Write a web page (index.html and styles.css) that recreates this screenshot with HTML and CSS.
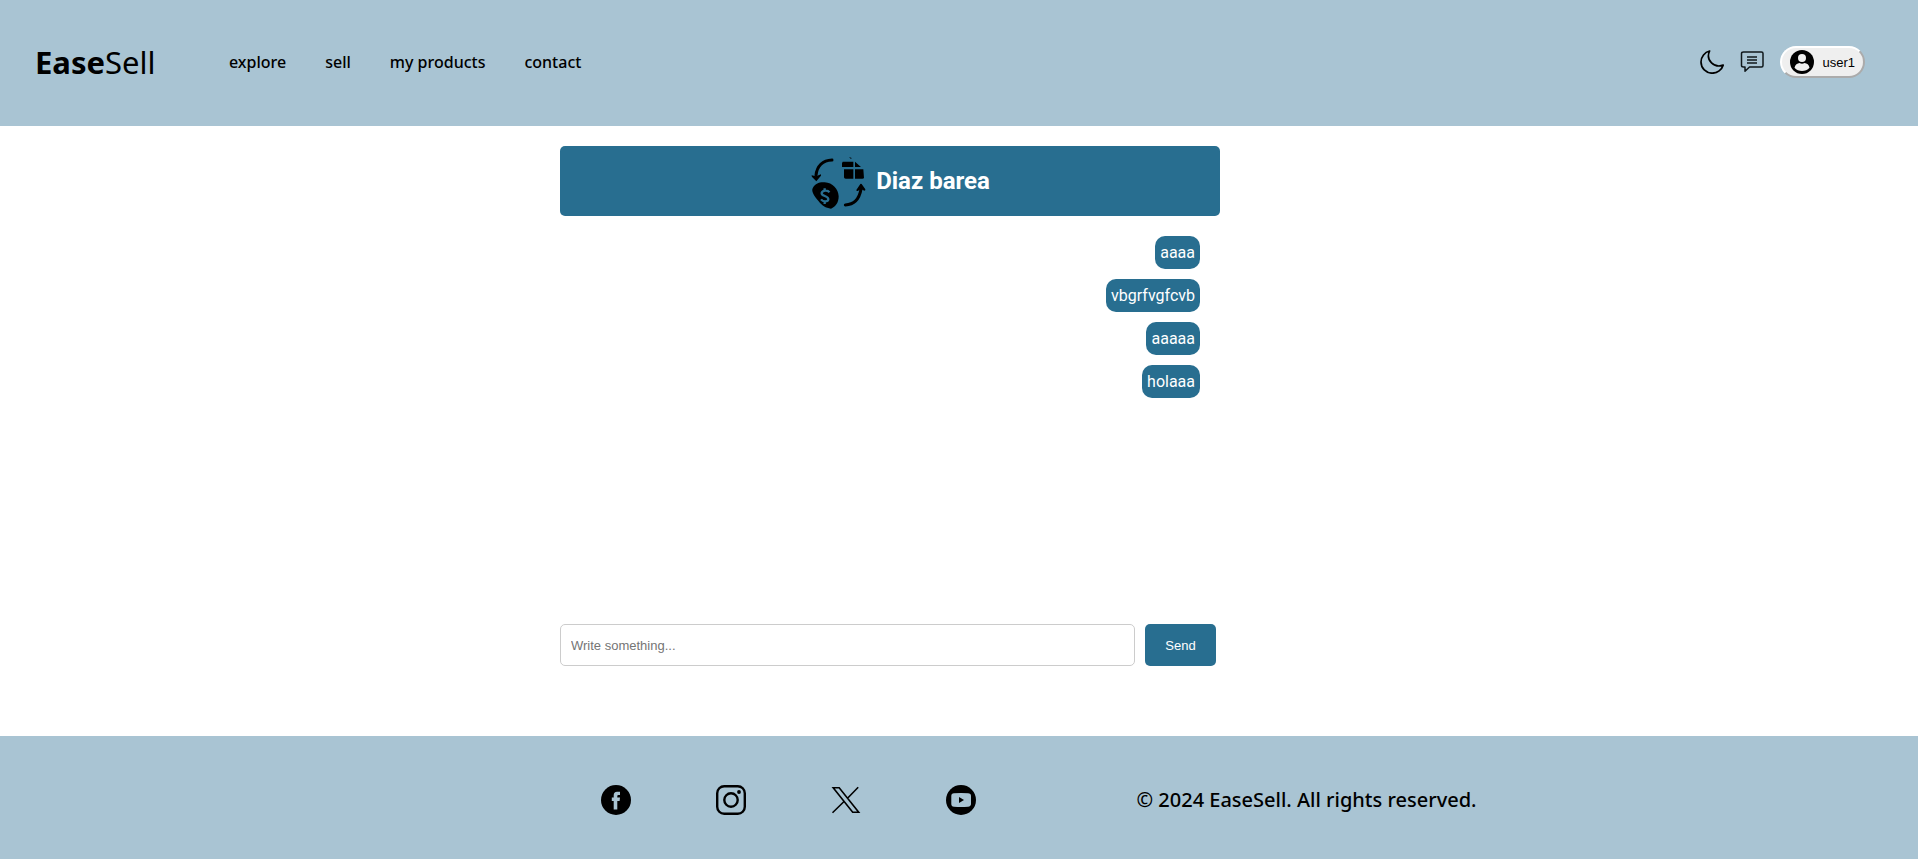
FILE: index.html
```html
<!DOCTYPE html>
<html lang="en">
<head>
<meta charset="utf-8">
<meta name="viewport" content="width=device-width, initial-scale=1">
<title>EaseSell</title>
<link rel="stylesheet" href="styles.css">
</head>
<body>
<header class="site-header">
  <a class="logo" href="#"><strong>Ease</strong>Sell</a>
  <nav class="nav">
    <a href="#">explore</a>
    <a href="#">sell</a>
    <a href="#">my products</a>
    <a href="#">contact</a>
  </nav>
  <div class="tools">
    <button class="icon-button" type="button" aria-label="Dark mode">
      <svg width="24" height="24" viewBox="0 0 24 24" fill="none" stroke="#000" stroke-width="1.7" stroke-linejoin="round"><path d="M9.6 1C4.8 2.2 1 6.600 1 12A11.200 11.200 0 0 0 12.200 23.200C17.400 23.200 21.800 19.800 23.200 15.100C14.600 18.500 5.200 10.200 9.600 1Z"/></svg>
    </button>
    <a class="icon-button" href="#" aria-label="Messages">
      <svg width="24" height="24" viewBox="0 0 24 24" fill="none" stroke="#10181c" stroke-width="1.5" stroke-linejoin="round"><path d="M3.500 2H21.500Q23 2 23 3.500V15.500Q23 17 21.500 17H9.500L5 21.300V17H3.500Q1.500 17 1.500 15.500V3.500Q1.500 2 3.500 2Z"/><path d="M7 7H17M7 10H17M7 13H17"/></svg>
    </a>
    <button class="user" type="button">
      <svg width="24" height="24" viewBox="0 0 24 24"><circle cx="12" cy="12" r="12"/><circle cx="12" cy="8" r="4" fill="#efefef"/><path d="M4.500 17.800C5 14.800 7.500 13.200 9.500 13Q12 14.500 14.500 13C17 13.200 19 14.800 19.500 17.800Q16.500 21 12 21T4.500 17.800Z" fill="#efefef"/></svg>
      user1
    </button>
  </div>
</header>
<main class="chat">
  <div class="chat-title">
    <svg width="60" height="60" viewBox="30 15 180 180">
      <g fill="none" stroke="#000" stroke-width="9" stroke-linecap="round"><path d="M96 42C68 43 51 61 48 88"/><path d="M136 177C162 176 178 158 183 130"/></g>
      <path d="M35 88L48 91 63 85Q65 90 59 94L49 106 37 94Q34 91 35 88ZM169 132L181 114Q184 112 187 117L196 130Q197 134 193 134L183 129 173 135Q169 136 169 132Z"/>
      <path d="M38 127C45 113 57 108 74 109C98 110 115 129 116 151C116 170 107 182 93 188C77 187 65 178 56 166C44 152 33 137 38 127Z"/>
      <path d="M88 139C84 132 67 132 65 141C63 151 86 149 85 160C84 168 69 168 63 160M74 127V135M74 165V174" fill="none" stroke="#286e90" stroke-width="7"/>
      <path d="M128 47H160V63H126V52ZM165 47L183 63H165ZM132 70H160V98H137Q132 98 132 94ZM165 70H190L192 96Q191 98 187 98H165ZM147 33L155 36 153 39Z"/>
    </svg>
    <h1>Diaz barea</h1>
  </div>
  <div class="messages">
    <p>aaaa</p>
    <p>vbgrfvgfcvb</p>
    <p>aaaaa</p>
    <p>holaaa</p>
  </div>
  <form class="composer">
    <input type="text" placeholder="Write something..." aria-label="Message">
    <button type="button">Send</button>
  </form>
</main>
<footer class="site-footer">
  <div class="social">
    <a href="#" aria-label="Facebook"><svg width="30" height="30" viewBox="0 0 30 30"><circle cx="15" cy="15" r="15"/><path d="M12.700 24.500V16H10.800V12.500H12.700V10.500Q12.700 6.800 16 6.800H19V10H17.300Q16.300 10 16.300 11V12.500H19L18.600 16H16.300V24.500Z" fill="#a9c4d3"/></svg></a>
    <a href="#" aria-label="Instagram"><svg width="30" height="30" viewBox="0 0 30 30" fill="none" stroke="#000" stroke-width="2.400"><rect x="1.200" y="1.200" width="27.600" height="27.600" rx="7"/><circle cx="15" cy="15" r="6.700"/><circle cx="23" cy="7" r="1.900" fill="#000" stroke="none"/></svg></a>
    <a href="#" aria-label="X"><svg width="30" height="30" viewBox="0 0 30 30" fill="none" stroke="#000" stroke-width="1.600"><path d="M2.200 2.800H8.200L27.700 27.200H21.700ZM27.200 2.200L16.300 13.500M1.500 27.800L13.300 16.300"/></svg></a>
    <a href="#" aria-label="YouTube"><svg width="30" height="30" viewBox="0 0 30 30"><circle cx="15" cy="15" r="15"/><path d="M8 8.300Q15 7.700 22 8.300Q25 8.500 25 11V19Q25 21.300 22 21.700Q15 22.300 8 21.700Q5.300 21.500 5.300 19V11Q5.300 8.500 8 8.300Z" fill="#a9c4d3"/><path d="M13 12V18L18 15Z"/></svg></a>
  </div>
  <p class="copyright">© 2024 EaseSell. All rights reserved.</p>
</footer>
</body>
</html>
```
FILE: styles.css
```css
* { box-sizing: border-box; }

body {
  margin: 0;
  min-height: 100vh;
  display: flex;
  flex-direction: column;
  font-family: Roboto, sans-serif;
  background: #fff;
  color: #000;
}

a { color: inherit; text-decoration: none; }
svg { display: block; flex: none; }

.site-header,
.site-footer {
  background: #a9c4d3;
  font-family: "Noto Sans", sans-serif;
}

.site-header {
  display: flex;
  align-items: center;
  padding: 40px 53px 42px 35px;
}

.logo { width: 194px; font-size: 31px; line-height: 44px; }
.nav { display: flex; gap: 39px; font-size: 16px; line-height: 24px; font-weight: 500; }

.tools { display: flex; align-items: center; gap: 16px; margin-left: auto; }
.icon-button { padding: 0; border: 0; background: none; cursor: pointer; }

.user {
  display: flex;
  align-items: center;
  gap: 8px;
  height: 32px;
  padding: 0 8px;
  border: 2px outset #fff;
  border-radius: 16px;
  background: #efefef;
  color: #000;
  font: 13px "Liberation Sans", sans-serif;
}

.chat {
  flex: 1;
  display: flex;
  flex-direction: column;
  align-items: flex-start;
  width: 798px;
  max-width: 100%;
  margin: 0 auto;
  padding: 20px 0 70px;
}

.chat-title {
  display: flex;
  align-items: center;
  justify-content: center;
  gap: 6px;
  width: 100%;
  max-width: 660px;
  padding: 5px 0 5px 20px;
  border-radius: 5px;
  background: #286e90;
  color: #fff;
}

.chat-title h1 { margin: 0; font-size: 24px; line-height: 28px; }

.messages {
  flex: 1;
  display: flex;
  flex-direction: column;
  align-items: flex-end;
  gap: 10px;
  width: 100%;
  max-width: 660px;
  padding: 20px;
}

.messages p {
  margin: 0;
  padding: 7px 5px;
  border-radius: 10px;
  background: #286e90;
  color: #fff;
  font-size: 16px;
  line-height: 19px;
}

.composer { display: flex; gap: 10px; width: 100%; max-width: 656px; }

.composer input,
.composer button {
  height: 42px;
  border-radius: 5px;
  font: 13px "Liberation Sans", sans-serif;
}

.composer input { flex: 1; min-width: 0; padding: 10px; border: 1px solid #ccc; }
.composer input::placeholder { color: #757575; }
.composer button { min-width: 71px; padding: 0 20px; border: 0; background: #286e90; color: #fff; }

.site-footer {
  display: flex;
  justify-content: center;
  align-items: center;
  gap: 160px;
  padding: 49px 0 44px 160px;
}

.social { display: flex; gap: 85px; }
.copyright { margin: 0; font-size: 20px; line-height: 30px; font-weight: 500; }
```
